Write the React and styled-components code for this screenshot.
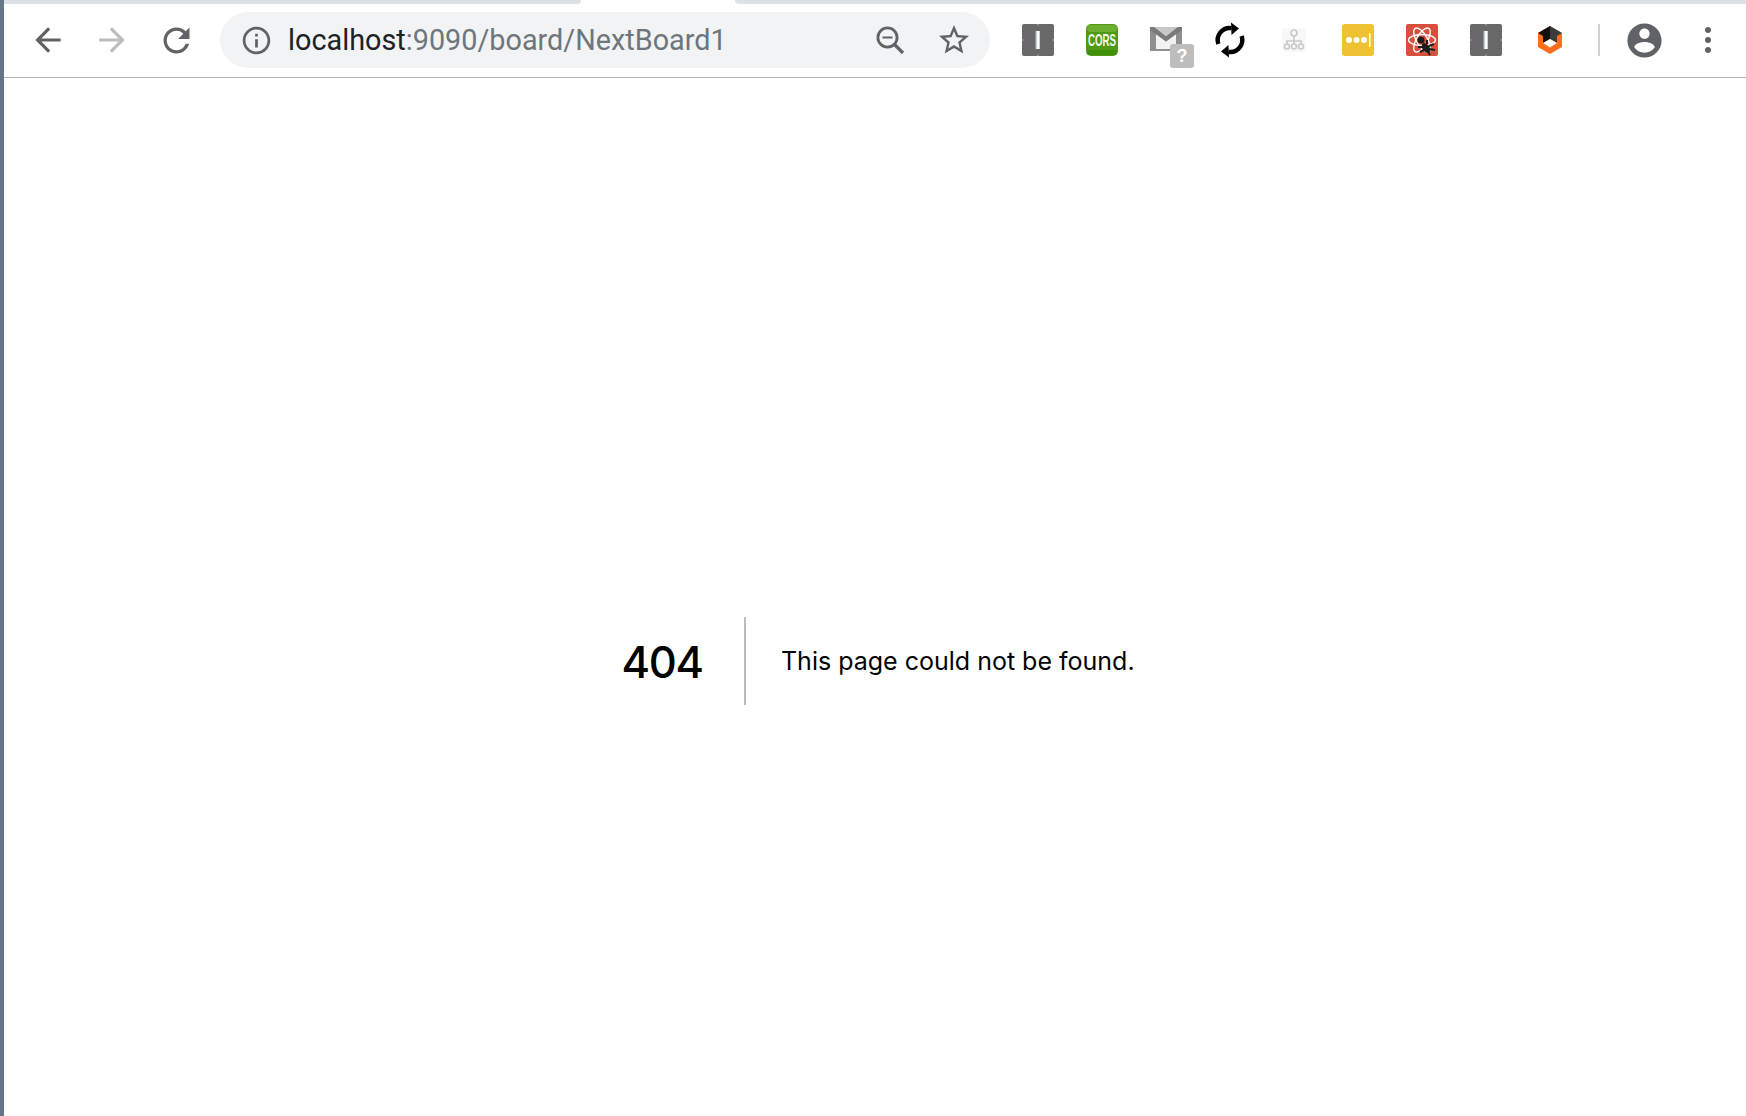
import styled, { createGlobalStyle } from 'styled-components';

const GlobalStyle = createGlobalStyle`
  html, body {
    margin: 0;
    padding: 0;
    height: 100%;
    overflow: hidden;
    background: #fff;
  }
`;

const Page = styled.div`
  height: 1116px;
  overflow: hidden;
  border-left: 4px solid #66758a;
  background: #fff;
`;

const TabStrip = styled.div`
  display: flex;
  height: 4px;
  gap: 154px;
`;

const TabEdge = styled.div`
  background: #dee1e6;
  width: ${props => props.$width || 'auto'};
  flex: ${props => (props.$width ? 'none' : 1)};
  border-radius: ${props => (props.$side === 'left' ? '0 0 8px 0' : '0 0 0 8px')};
`;

const Toolbar = styled.div`
  display: flex;
  align-items: center;
  height: 72px;
  padding: 0 0 1px 12px;
  border-bottom: 1px solid #b4b4b4;
  font-family: Roboto, "Liberation Sans", sans-serif;
`;

const Slot = styled.div`
  position: relative;
  flex: none;
  width: 64px;
  height: 64px;
  display: flex;
  align-items: center;
  justify-content: center;
`;

const Glyph = styled.svg`
  display: block;
  flex: none;
  overflow: visible;
  width: ${props => props.$size}px;
  height: ${props => props.$size}px;
  fill: ${props => props.$fill || '#5f6368'};
`;

const Omnibox = styled.div`
  flex: none;
  display: flex;
  align-items: center;
  box-sizing: border-box;
  width: 770px;
  height: 56px;
  margin: 0 16px 0 12px;
  padding: 0 4px;
  border-radius: 28px;
  background: #f1f3f4;
`;

const InfoSlot = styled.div`
  flex: none;
  width: 56px;
  display: flex;
  justify-content: center;
  margin-left: 4px;
`;

const Url = styled.div`
  flex: 1;
  margin-left: 4px;
  font-size: 28.8px;
  line-height: 56px;
  white-space: nowrap;
  color: #70757a;
`;

const Host = styled.span`
  color: #202124;
`;

const BoxAction = styled.div`
  flex: none;
  width: 64px;
  display: flex;
  justify-content: center;
`;

const Divider = styled.div`
  flex: none;
  width: 2px;
  height: 32px;
  margin: 0 12px 0 16px;
  background: #d0d0d0;
`;

const Badge = styled.div`
  position: absolute;
  left: 36px;
  top: 36px;
  width: 24px;
  height: 24px;
  border-radius: 3px;
  background: #bdbdbd;
  color: #fff;
  font: 700 18px/24px "Liberation Sans", sans-serif;
  text-align: center;
`;

const Main = styled.main`
  height: 1166px;
  padding-left: 6px;
  display: flex;
  align-items: center;
  justify-content: center;
  font-family: Inter, "Liberation Sans", sans-serif;
  color: #000;
`;

const Code = styled.h1`
  margin: 0 35px 0 0;
  padding-right: 41px;
  height: 88px;
  border-right: 2px solid #bcbcbc;
  font-size: 43.5px;
  font-weight: 500;
  letter-spacing: -1.2px;
  line-height: 90px;
`;

const Message = styled.h2`
  margin: 0;
  font-size: 25px;
  font-weight: 400;
  line-height: 88px;
`;

const Path = ({ size, fill, d }) => (
  <Glyph $size={size} $fill={fill} viewBox="0 0 24 24"><path d={d} /></Glyph>
);

const ZoomOutIcon = () => (
  <Glyph $size={36} viewBox="0 0 36 36">
    <g fill="none" stroke="#5f6368" strokeWidth="2.800">
      <circle cx="15.500" cy="15.500" r="9.600" />
      <path d="M22.500 22.500L31 31" strokeWidth="3.200" />
      <path d="M10.500 15.500h10" strokeWidth="2" />
    </g>
  </Glyph>
);

const InspectIcon = () => (
  <Glyph $size={32} viewBox="0 0 32 32">
    <rect width="32" height="32" rx="2" fill="#696969" />
    <rect x="0" y="15.500" width="1.500" height="1" fill="#bdbdbd" />
    <rect x="30.500" y="15.500" width="1.500" height="1" fill="#bdbdbd" />
    <rect x="15.500" y="0" width="1" height="1.500" fill="#bdbdbd" />
    <rect x="15.500" y="30.500" width="1" height="1.500" fill="#bdbdbd" />
    <rect x="13.500" y="7" width="1" height="18" fill="#a8c2ee" />
    <rect x="14.500" y="7" width="2.500" height="18" fill="#fff" />
    <rect x="17" y="7" width="1" height="18" fill="#e4d4ac" />
  </Glyph>
);

const CorsIcon = () => (
  <Glyph $size={32} viewBox="0 0 32 32">
    <rect width="32" height="32" rx="5" fill="#4f9a12" />
    <rect x="1" y="1" width="30" height="7" rx="3" fill="#6cae2f" />
    <rect x="1" y="26" width="30" height="5" rx="2" fill="#3f8f0a" />
    <text x="16" y="22" textAnchor="middle" textLength="28" lengthAdjust="spacingAndGlyphs"
      fontFamily="'Liberation Sans Narrow', 'Liberation Sans', sans-serif" fontWeight="700" fontSize="17" fill="#f2f7ea">CORS</text>
  </Glyph>
);

const MailIcon = () => (
  <Glyph $size={32} viewBox="0 0 32 32">
    <path d="M0 3h32v24H0z" fill="#8f8f8f" />
    <path d="M6 9.500l10 8 10-8V25H6z" fill="#f2f2f2" />
    <path d="M4 3h24l-12 9.500z" fill="#c8c8c8" />
    <path d="M0 3h4l12 9.500L28 3h4v3L16 17.500 0 6z" fill="#7a7a7a" />
  </Glyph>
);

// two arcs with a head on each, same stroke turned half a circle
const SyncArc = ({ turn }) => (
  <g transform={`rotate(${turn} 17 17)`}>
    <path d="M5.400 21A12 12 0 0 1 18.500 5.100" fill="none" stroke="#000" strokeWidth="4.400" />
    <path d="M18 -.5L26 5.500 18.500 12z" fill="#000" />
  </g>
);

const SyncIcon = () => (
  <Glyph $size={34} viewBox="0 0 34 34">
    <SyncArc turn={0} />
    <SyncArc turn={180} />
  </Glyph>
);

const TreeIcon = () => (
  <Glyph $size={24} viewBox="0 0 24 24">
    <rect width="24" height="24" rx="3" fill="#f8f8f8" />
    <g fill="none" stroke="#c9c9c9" strokeWidth="1.600">
      <circle cx="12" cy="5" r="3" />
      <circle cx="5" cy="18.500" r="2.500" />
      <circle cx="12" cy="18.500" r="2.500" />
      <circle cx="19" cy="18.500" r="2.500" />
      <path d="M12 8v8M5 16v-3h14v3" />
    </g>
  </Glyph>
);

const PasswordIcon = () => (
  <Glyph $size={32} viewBox="0 0 32 32">
    <rect width="32" height="32" rx="3" fill="#eec232" />
    <g fill="#fff">
      <circle cx="7" cy="16" r="3" />
      <circle cx="14.500" cy="16" r="3" />
      <circle cx="22" cy="16" r="3" />
      <rect x="27" y="9" width="1.500" height="14" />
    </g>
  </Glyph>
);

const AtomBugIcon = () => (
  <Glyph $size={32} viewBox="0 0 32 32">
    <rect width="32" height="32" rx="2" fill="#d94f3d" />
    <g fill="none" stroke="#fff" strokeWidth="1.400">
      <ellipse cx="16" cy="16" rx="13.500" ry="5.500" />
      <ellipse cx="16" cy="16" rx="13.500" ry="5.500" transform="rotate(60 16 16)" />
      <ellipse cx="16" cy="16" rx="13.500" ry="5.500" transform="rotate(120 16 16)" />
    </g>
    <circle cx="15" cy="16" r="3.500" fill="#1c1c1c" />
    <ellipse cx="20" cy="24" rx="3.500" ry="5.500" fill="#1c1c1c" transform="rotate(-35 20 24)" />
    <path d="M12 23l5 0M14 28l4-2M21 16l0 4M28 20l-5 2M29 26l-6-1M24 31l-2-3" stroke="#1c1c1c" strokeWidth="2" fill="none" />
  </Glyph>
);

const HexIcon = () => (
  <Glyph $size={28} viewBox="0 0 28 28">
    <path d="M14 0L26 7v14L14 28 2 21V7z" fill="#ff6d1f" />
    <path d="M14 0L2 7l5 3v7l7-4z" fill="#111" />
    <path d="M14 0l12 7-5 3v7l-7-4z" fill="#3b3b3b" />
    <path d="M14 13l7 4-7 4.500L7 17z" fill="#fff" />
  </Glyph>
);

const MenuIcon = () => (
  <Glyph $size={26} viewBox="0 0 26 26">
    <circle cx="13" cy="3" r="3" />
    <circle cx="13" cy="13" r="3" />
    <circle cx="13" cy="23" r="3" />
  </Glyph>
);

const ICONS = {
  back: 'M20 11H7.830l5.590-5.590L12 4l-8 8 8 8 1.410-1.410L7.830 13H20v-2z',
  forward: 'M12 4l-1.410 1.410L16.170 11H4v2h12.170l-5.580 5.590L12 20l8-8z',
  reload: 'M17.650 6.350C16.200 4.900 14.210 4 12 4c-4.420 0-7.990 3.580-7.990 8s3.570 8 7.990 8c3.730 0 6.840-2.550 7.730-6h-2.080c-.82 2.330-3.040 4-5.650 4-3.310 0-6-2.690-6-6s2.690-6 6-6c1.660 0 3.140.69 4.220 1.780L13 11h7V4l-2.350 2.350z',
  info: 'M11 7h2v2h-2zm0 4h2v6h-2zm1-9C6.480 2 2 6.480 2 12s4.480 10 10 10 10-4.480 10-10S17.520 2 12 2zm0 18c-4.410 0-8-3.590-8-8s3.590-8 8-8 8 3.590 8 8-3.590 8-8 8z',
  star: 'M22 9.240l-7.190-.62L12 2 9.190 8.630 2 9.240l5.460 4.730L5.820 21 12 17.270 18.180 21l-1.630-7.030L22 9.240zM12 15.400l-3.760 2.270 1-4.280-3.320-2.880 4.380-.38L12 6.100l1.710 4.040 4.380.38-3.320 2.880 1 4.280L12 15.400z',
  account: 'M12 2C6.480 2 2 6.480 2 12s4.480 10 10 10 10-4.480 10-10S17.520 2 12 2zm0 3c1.660 0 3 1.340 3 3s-1.340 3-3 3-3-1.340-3-3 1.340-3 3-3zm0 14.200c-2.500 0-4.710-1.280-6-3.220.03-1.990 4-3.080 6-3.080 1.990 0 5.970 1.090 6 3.080-1.290 1.940-3.500 3.220-6 3.220z',
};

export default function App() {
  return (
    <>
      <GlobalStyle />
      <Page>
        <TabStrip>
          <TabEdge $side="left" $width="577px" />
          <TabEdge $side="right" />
        </TabStrip>
        <Toolbar>
          <Slot><Path size={38} d={ICONS.back} /></Slot>
          <Slot><Path size={38} fill="#bdbdbd" d={ICONS.forward} /></Slot>
          <Slot><Path size={39} d={ICONS.reload} /></Slot>
          <Omnibox>
            <InfoSlot><Path size={33} d={ICONS.info} /></InfoSlot>
            <Url><Host>localhost</Host>:9090/board/NextBoard1</Url>
            <BoxAction><ZoomOutIcon /></BoxAction>
            <BoxAction><Path size={36} d={ICONS.star} /></BoxAction>
          </Omnibox>
          <Slot><InspectIcon /></Slot>
          <Slot><CorsIcon /></Slot>
          <Slot><MailIcon /><Badge>?</Badge></Slot>
          <Slot><SyncIcon /></Slot>
          <Slot><TreeIcon /></Slot>
          <Slot><PasswordIcon /></Slot>
          <Slot><AtomBugIcon /></Slot>
          <Slot><InspectIcon /></Slot>
          <Slot><HexIcon /></Slot>
          <Divider />
          <Slot><Path size={41} d={ICONS.account} /></Slot>
          <Slot><MenuIcon /></Slot>
        </Toolbar>
        <Main>
          <Code>404</Code>
          <Message>This page could not be found.</Message>
        </Main>
      </Page>
    </>
  );
}
